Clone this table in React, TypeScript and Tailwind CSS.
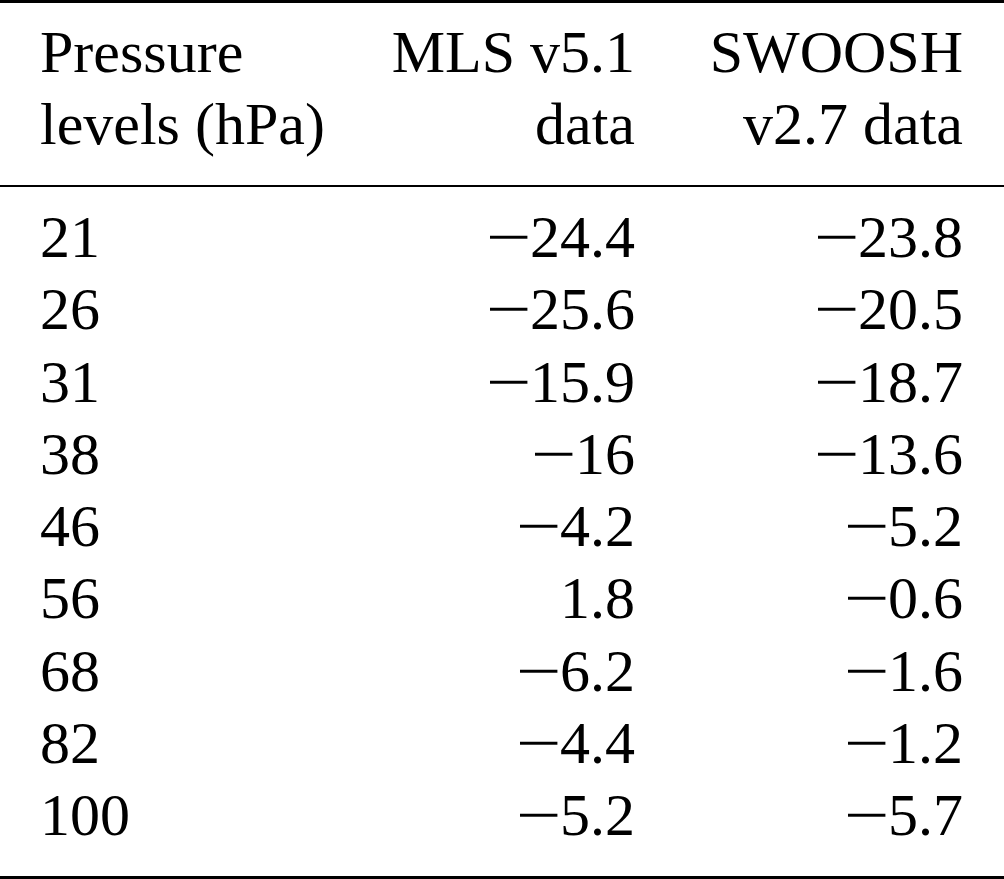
import React from 'react';

const rows: [string, string, string][] = [
  ['21', '−24.4', '−23.8'],
  ['26', '−25.6', '−20.5'],
  ['31', '−15.9', '−18.7'],
  ['38', '−16', '−13.6'],
  ['46', '−4.2', '−5.2'],
  ['56', '1.8', '−0.6'],
  ['68', '−6.2', '−1.6'],
  ['82', '−4.4', '−1.2'],
  ['100', '−5.2', '−5.7'],
];

// LaTeX math minus is longer than the text font's one
function Num({ value }: { value: string }) {
  if (!value.startsWith('−')) return <>{value}</>;
  return (
    <>
      <span className="inline-block w-[44px] text-left">
        <span className="inline-block origin-left scale-x-[1.34]">−</span>
      </span>
      {value.slice(1)}
    </>
  );
}

export default function App() {
  return (
    <div
      className="w-[1004px] bg-white text-black text-[60px] leading-[72.3px]"
      style={{ fontFamily: '"Liberation Serif", "Times New Roman", serif' }}
    >
      {/* Header */}
      <div className="border-t-[3px] border-black pt-[12.6px] pb-[24.8px] pl-[40px] pr-[41px] grid grid-cols-[1fr_250px_328px]">
        <div>
          Pressure
          <br />
          levels (hPa)
        </div>
        <div className="text-right">
          MLS v5.1
          <br />
          data
        </div>
        <div className="text-right">
          SWOOSH
          <br />
          v2.7 data
        </div>
      </div>

      {/* Body */}
      <div className="border-t-2 border-b-[3px] border-black pt-[14px] pb-[24.4px] pl-[40px] pr-[41px]">
        {rows.map(([p, mls, sw]) => (
          <div key={p} className="grid grid-cols-[1fr_250px_328px]">
            <div>{p}</div>
            <div className="text-right">
              <Num value={mls} />
            </div>
            <div className="text-right">
              <Num value={sw} />
            </div>
          </div>
        ))}
      </div>
    </div>
  );
}
